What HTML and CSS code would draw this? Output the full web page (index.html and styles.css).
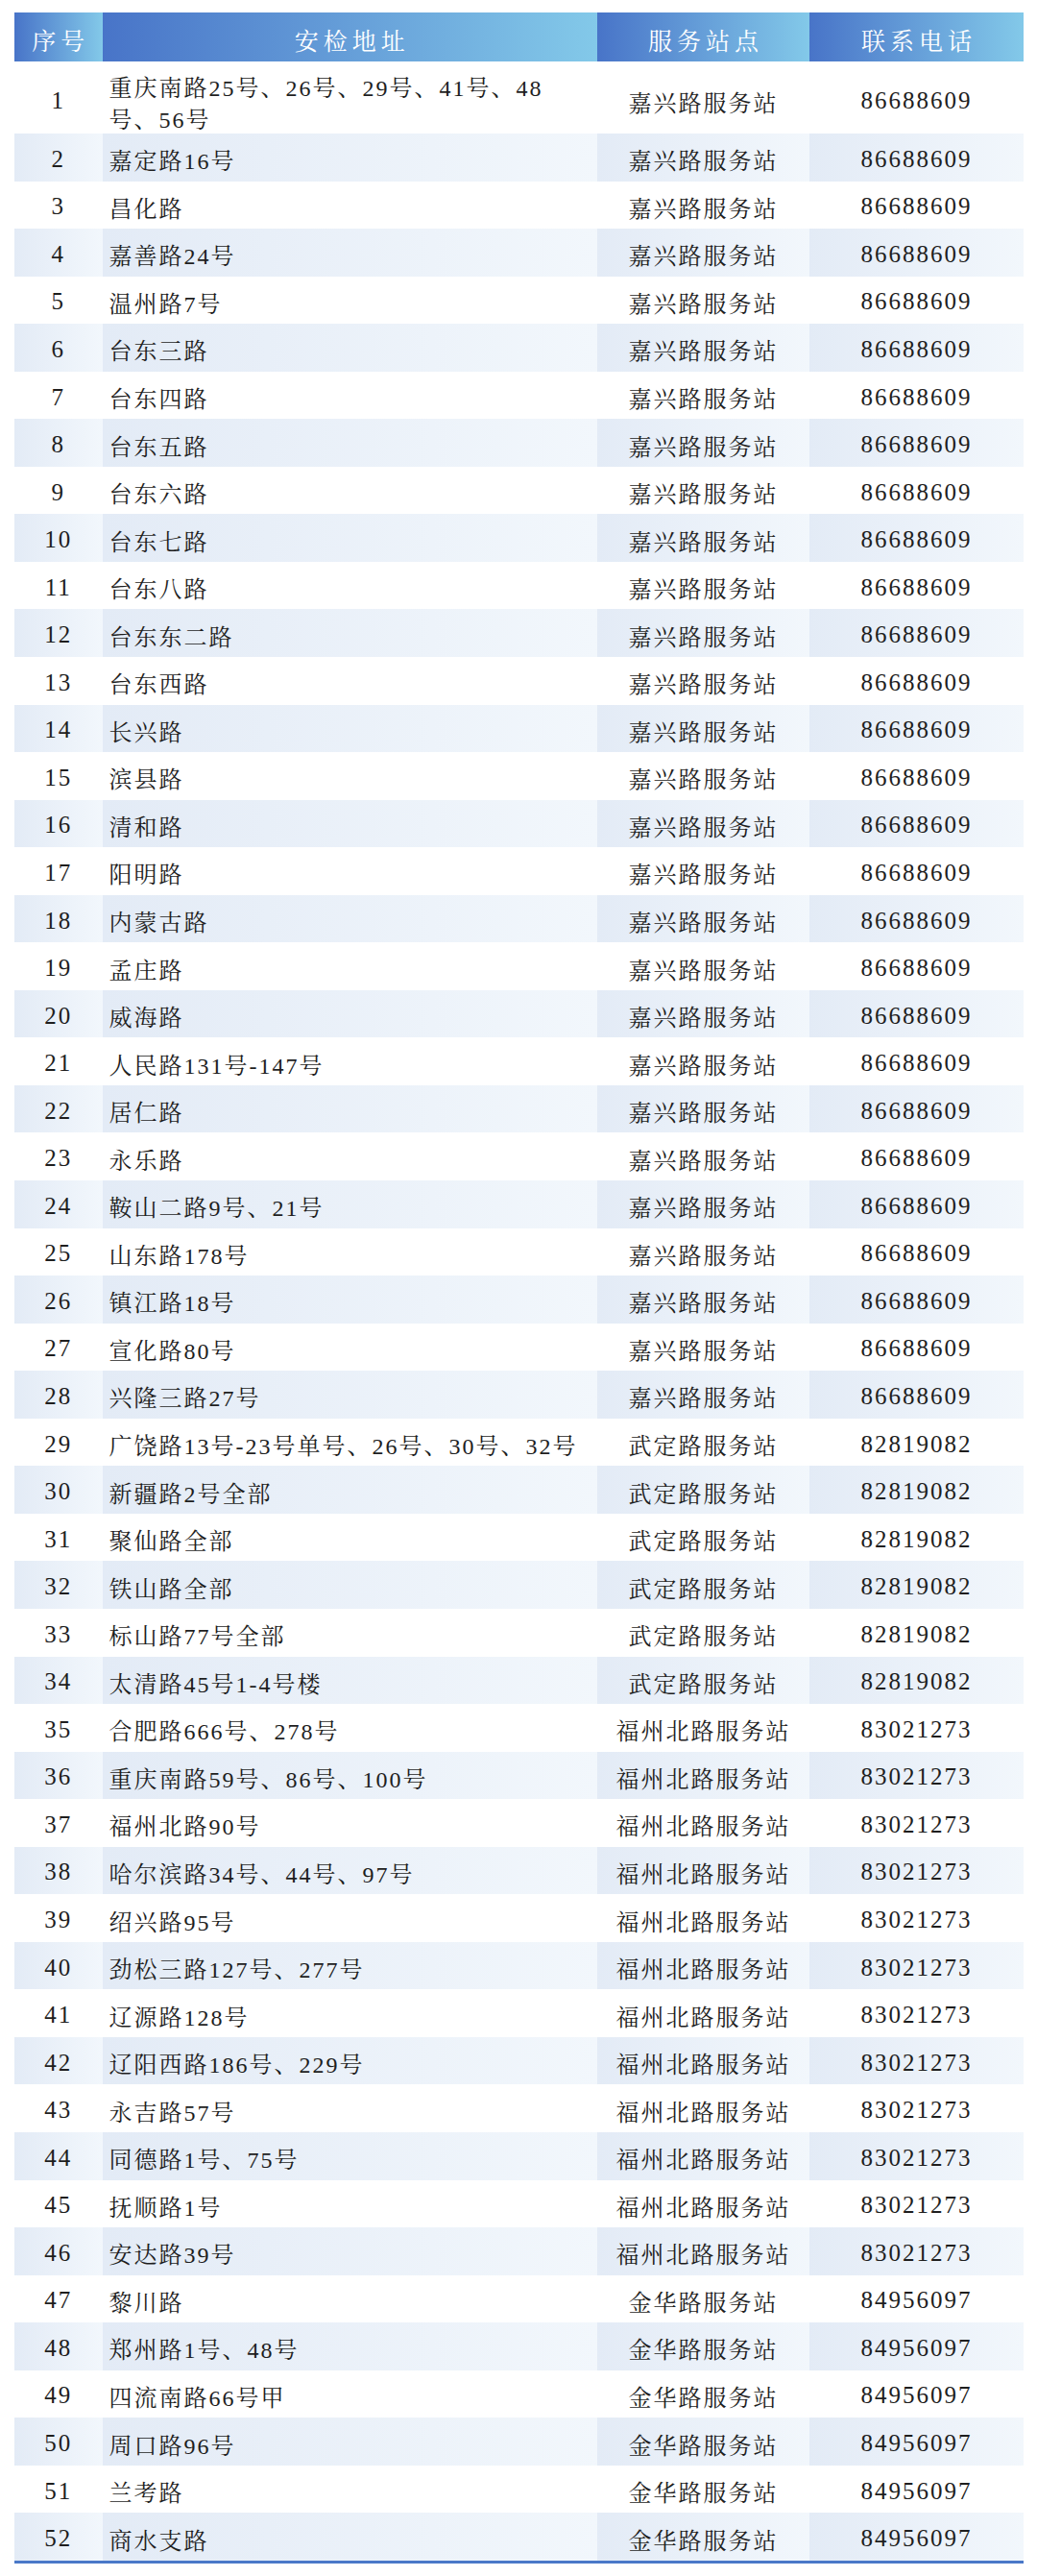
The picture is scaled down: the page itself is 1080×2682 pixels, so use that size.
FILE: index.html
```html
<!DOCTYPE html>
<html lang="zh-CN">
<head>
<meta charset="utf-8">
<title>安检地址</title>
<link rel="stylesheet" href="styles.css">
</head>
<body>
<div class="sheet">
  <div class="row head">
    <div class="cell c-no">序号</div>
    <div class="cell c-addr">安检地址</div>
    <div class="cell c-st">服务站点</div>
    <div class="cell c-tel">联系电话</div>
  </div>
  <div class="row tall"><div class="cell c-no">1</div><div class="cell c-addr">重庆南路25号、26号、29号、41号、48<br>号、56号</div><div class="cell c-st">嘉兴路服务站</div><div class="cell c-tel">86688609</div></div>
  <div class="row alt"><div class="cell c-no">2</div><div class="cell c-addr">嘉定路16号</div><div class="cell c-st">嘉兴路服务站</div><div class="cell c-tel">86688609</div></div>
  <div class="row"><div class="cell c-no">3</div><div class="cell c-addr">昌化路</div><div class="cell c-st">嘉兴路服务站</div><div class="cell c-tel">86688609</div></div>
  <div class="row alt"><div class="cell c-no">4</div><div class="cell c-addr">嘉善路24号</div><div class="cell c-st">嘉兴路服务站</div><div class="cell c-tel">86688609</div></div>
  <div class="row"><div class="cell c-no">5</div><div class="cell c-addr">温州路7号</div><div class="cell c-st">嘉兴路服务站</div><div class="cell c-tel">86688609</div></div>
  <div class="row alt"><div class="cell c-no">6</div><div class="cell c-addr">台东三路</div><div class="cell c-st">嘉兴路服务站</div><div class="cell c-tel">86688609</div></div>
  <div class="row"><div class="cell c-no">7</div><div class="cell c-addr">台东四路</div><div class="cell c-st">嘉兴路服务站</div><div class="cell c-tel">86688609</div></div>
  <div class="row alt"><div class="cell c-no">8</div><div class="cell c-addr">台东五路</div><div class="cell c-st">嘉兴路服务站</div><div class="cell c-tel">86688609</div></div>
  <div class="row"><div class="cell c-no">9</div><div class="cell c-addr">台东六路</div><div class="cell c-st">嘉兴路服务站</div><div class="cell c-tel">86688609</div></div>
  <div class="row alt"><div class="cell c-no">10</div><div class="cell c-addr">台东七路</div><div class="cell c-st">嘉兴路服务站</div><div class="cell c-tel">86688609</div></div>
  <div class="row"><div class="cell c-no">11</div><div class="cell c-addr">台东八路</div><div class="cell c-st">嘉兴路服务站</div><div class="cell c-tel">86688609</div></div>
  <div class="row alt"><div class="cell c-no">12</div><div class="cell c-addr">台东东二路</div><div class="cell c-st">嘉兴路服务站</div><div class="cell c-tel">86688609</div></div>
  <div class="row"><div class="cell c-no">13</div><div class="cell c-addr">台东西路</div><div class="cell c-st">嘉兴路服务站</div><div class="cell c-tel">86688609</div></div>
  <div class="row alt"><div class="cell c-no">14</div><div class="cell c-addr">长兴路</div><div class="cell c-st">嘉兴路服务站</div><div class="cell c-tel">86688609</div></div>
  <div class="row"><div class="cell c-no">15</div><div class="cell c-addr">滨县路</div><div class="cell c-st">嘉兴路服务站</div><div class="cell c-tel">86688609</div></div>
  <div class="row alt"><div class="cell c-no">16</div><div class="cell c-addr">清和路</div><div class="cell c-st">嘉兴路服务站</div><div class="cell c-tel">86688609</div></div>
  <div class="row"><div class="cell c-no">17</div><div class="cell c-addr">阳明路</div><div class="cell c-st">嘉兴路服务站</div><div class="cell c-tel">86688609</div></div>
  <div class="row alt"><div class="cell c-no">18</div><div class="cell c-addr">内蒙古路</div><div class="cell c-st">嘉兴路服务站</div><div class="cell c-tel">86688609</div></div>
  <div class="row"><div class="cell c-no">19</div><div class="cell c-addr">孟庄路</div><div class="cell c-st">嘉兴路服务站</div><div class="cell c-tel">86688609</div></div>
  <div class="row alt"><div class="cell c-no">20</div><div class="cell c-addr">威海路</div><div class="cell c-st">嘉兴路服务站</div><div class="cell c-tel">86688609</div></div>
  <div class="row"><div class="cell c-no">21</div><div class="cell c-addr">人民路131号-147号</div><div class="cell c-st">嘉兴路服务站</div><div class="cell c-tel">86688609</div></div>
  <div class="row alt"><div class="cell c-no">22</div><div class="cell c-addr">居仁路</div><div class="cell c-st">嘉兴路服务站</div><div class="cell c-tel">86688609</div></div>
  <div class="row"><div class="cell c-no">23</div><div class="cell c-addr">永乐路</div><div class="cell c-st">嘉兴路服务站</div><div class="cell c-tel">86688609</div></div>
  <div class="row alt"><div class="cell c-no">24</div><div class="cell c-addr">鞍山二路9号、21号</div><div class="cell c-st">嘉兴路服务站</div><div class="cell c-tel">86688609</div></div>
  <div class="row"><div class="cell c-no">25</div><div class="cell c-addr">山东路178号</div><div class="cell c-st">嘉兴路服务站</div><div class="cell c-tel">86688609</div></div>
  <div class="row alt"><div class="cell c-no">26</div><div class="cell c-addr">镇江路18号</div><div class="cell c-st">嘉兴路服务站</div><div class="cell c-tel">86688609</div></div>
  <div class="row"><div class="cell c-no">27</div><div class="cell c-addr">宣化路80号</div><div class="cell c-st">嘉兴路服务站</div><div class="cell c-tel">86688609</div></div>
  <div class="row alt"><div class="cell c-no">28</div><div class="cell c-addr">兴隆三路27号</div><div class="cell c-st">嘉兴路服务站</div><div class="cell c-tel">86688609</div></div>
  <div class="row"><div class="cell c-no">29</div><div class="cell c-addr">广饶路13号-23号单号、26号、30号、32号</div><div class="cell c-st">武定路服务站</div><div class="cell c-tel">82819082</div></div>
  <div class="row alt"><div class="cell c-no">30</div><div class="cell c-addr">新疆路2号全部</div><div class="cell c-st">武定路服务站</div><div class="cell c-tel">82819082</div></div>
  <div class="row"><div class="cell c-no">31</div><div class="cell c-addr">聚仙路全部</div><div class="cell c-st">武定路服务站</div><div class="cell c-tel">82819082</div></div>
  <div class="row alt"><div class="cell c-no">32</div><div class="cell c-addr">铁山路全部</div><div class="cell c-st">武定路服务站</div><div class="cell c-tel">82819082</div></div>
  <div class="row"><div class="cell c-no">33</div><div class="cell c-addr">标山路77号全部</div><div class="cell c-st">武定路服务站</div><div class="cell c-tel">82819082</div></div>
  <div class="row alt"><div class="cell c-no">34</div><div class="cell c-addr">太清路45号1-4号楼</div><div class="cell c-st">武定路服务站</div><div class="cell c-tel">82819082</div></div>
  <div class="row"><div class="cell c-no">35</div><div class="cell c-addr">合肥路666号、278号</div><div class="cell c-st">福州北路服务站</div><div class="cell c-tel">83021273</div></div>
  <div class="row alt"><div class="cell c-no">36</div><div class="cell c-addr">重庆南路59号、86号、100号</div><div class="cell c-st">福州北路服务站</div><div class="cell c-tel">83021273</div></div>
  <div class="row"><div class="cell c-no">37</div><div class="cell c-addr">福州北路90号</div><div class="cell c-st">福州北路服务站</div><div class="cell c-tel">83021273</div></div>
  <div class="row alt"><div class="cell c-no">38</div><div class="cell c-addr">哈尔滨路34号、44号、97号</div><div class="cell c-st">福州北路服务站</div><div class="cell c-tel">83021273</div></div>
  <div class="row"><div class="cell c-no">39</div><div class="cell c-addr">绍兴路95号</div><div class="cell c-st">福州北路服务站</div><div class="cell c-tel">83021273</div></div>
  <div class="row alt"><div class="cell c-no">40</div><div class="cell c-addr">劲松三路127号、277号</div><div class="cell c-st">福州北路服务站</div><div class="cell c-tel">83021273</div></div>
  <div class="row"><div class="cell c-no">41</div><div class="cell c-addr">辽源路128号</div><div class="cell c-st">福州北路服务站</div><div class="cell c-tel">83021273</div></div>
  <div class="row alt"><div class="cell c-no">42</div><div class="cell c-addr">辽阳西路186号、229号</div><div class="cell c-st">福州北路服务站</div><div class="cell c-tel">83021273</div></div>
  <div class="row"><div class="cell c-no">43</div><div class="cell c-addr">永吉路57号</div><div class="cell c-st">福州北路服务站</div><div class="cell c-tel">83021273</div></div>
  <div class="row alt"><div class="cell c-no">44</div><div class="cell c-addr">同德路1号、75号</div><div class="cell c-st">福州北路服务站</div><div class="cell c-tel">83021273</div></div>
  <div class="row"><div class="cell c-no">45</div><div class="cell c-addr">抚顺路1号</div><div class="cell c-st">福州北路服务站</div><div class="cell c-tel">83021273</div></div>
  <div class="row alt"><div class="cell c-no">46</div><div class="cell c-addr">安达路39号</div><div class="cell c-st">福州北路服务站</div><div class="cell c-tel">83021273</div></div>
  <div class="row"><div class="cell c-no">47</div><div class="cell c-addr">黎川路</div><div class="cell c-st">金华路服务站</div><div class="cell c-tel">84956097</div></div>
  <div class="row alt"><div class="cell c-no">48</div><div class="cell c-addr">郑州路1号、48号</div><div class="cell c-st">金华路服务站</div><div class="cell c-tel">84956097</div></div>
  <div class="row"><div class="cell c-no">49</div><div class="cell c-addr">四流南路66号甲</div><div class="cell c-st">金华路服务站</div><div class="cell c-tel">84956097</div></div>
  <div class="row alt"><div class="cell c-no">50</div><div class="cell c-addr">周口路96号</div><div class="cell c-st">金华路服务站</div><div class="cell c-tel">84956097</div></div>
  <div class="row"><div class="cell c-no">51</div><div class="cell c-addr">兰考路</div><div class="cell c-st">金华路服务站</div><div class="cell c-tel">84956097</div></div>
  <div class="row alt"><div class="cell c-no">52</div><div class="cell c-addr">商水支路</div><div class="cell c-st">金华路服务站</div><div class="cell c-tel">84956097</div></div>
</div>
</body>
</html>
```
FILE: styles.css
```css
html, body {
  margin: 0;
  padding: 0;
  background: #ffffff;
}

body {
  font-family: "Liberation Serif", "Noto Serif CJK SC", "Noto Sans CJK SC", serif;
  color: #1e1e1e;
}

.sheet {
  width: 1051px;
  margin: 13px 0 0 15px;
  border-bottom: 3px solid #4a78c8;
}

.row {
  display: grid;
  grid-template-columns: 91.5px 515.5px 221px 223px;
  height: 49.55px;
}

.row.head {
  height: 51px;
}

.row.tall {
  height: 75px;
}

.cell {
  display: flex;
  align-items: center;
  justify-content: center;
  font-size: 24px;
  letter-spacing: 2px;
  white-space: nowrap;
  padding-top: 4px;
  box-sizing: border-box;
}

.c-no,
.c-tel {
  font-size: 25px;
}

.c-addr {
  justify-content: flex-start;
  padding-left: 7px;
}

.tall .c-addr {
  line-height: 33px;
  padding-top: 12px;
}

.alt .cell {
  background: linear-gradient(90deg, #e3ebf6 0%, #f2f7fc 100%);
}

.head .cell {
  background: linear-gradient(90deg, #4874c8 0%, #83c9e9 100%);
  color: #ffffff;
  font-size: 25px;
  letter-spacing: 5px;
  padding-left: 5px;
  padding-top: 4px;
}

.head .c-addr {
  justify-content: center;
}
```
